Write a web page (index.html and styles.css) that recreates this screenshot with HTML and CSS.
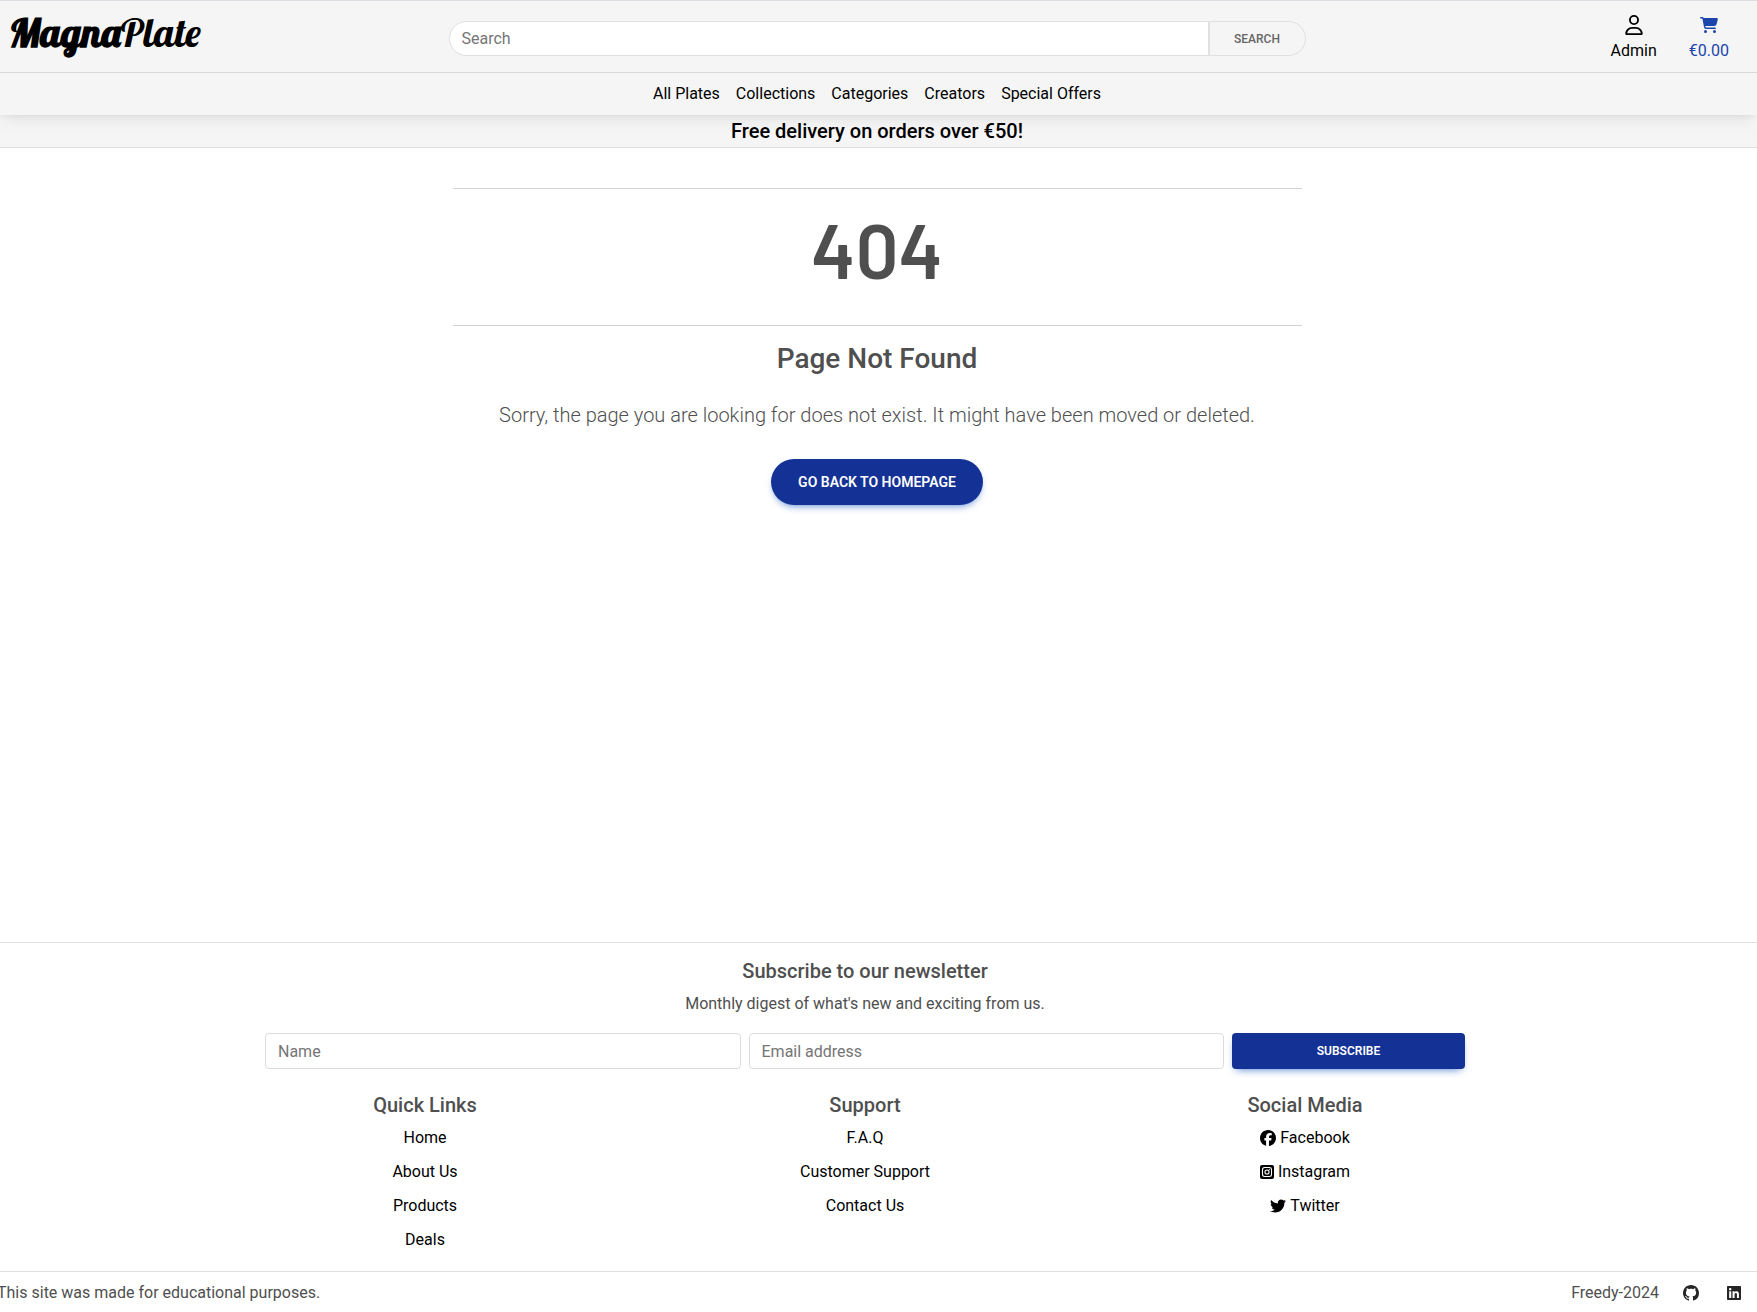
FILE: index.html
```html
<!DOCTYPE html>
<html lang="en">
<head>
<meta charset="utf-8">
<meta name="viewport" content="width=device-width, initial-scale=1">
<title>MagnaPlate</title>
<link rel="stylesheet" href="styles.css">
</head>
<body>
<header class="site-header">
  <div class="topbar">
    <a class="logo" href="#"><strong>Magna</strong><span>Plate</span></a>
    <form class="search">
      <input type="search" placeholder="Search" aria-label="Search">
      <button type="button">Search</button>
    </form>
    <div class="account">
      <a class="account-link" href="#">
        <svg class="icon-user" viewBox="0 0 448 512" aria-hidden="true"><path d="M304 128a80 80 0 1 0 -160 0 80 80 0 1 0 160 0zM96 128a128 128 0 1 1 256 0A128 128 0 1 1 96 128zM49.3 464H398.7c-8.9-63.3-63.3-112-129-112H178.3c-65.7 0-120.1 48.7-129 112zM0 482.3C0 383.8 79.8 304 178.3 304h91.4C368.2 304 448 383.8 448 482.3c0 16.4-13.3 29.7-29.7 29.7H29.7C13.3 512 0 498.7 0 482.3z"/></svg>
        <span>Admin</span>
      </a>
      <a class="account-link cart" href="#">
        <svg class="icon-cart" viewBox="0 0 576 512" aria-hidden="true"><path d="M0 24C0 10.7 10.7 0 24 0H69.5c22 0 41.5 12.8 50.6 32h411c26.3 0 45.5 25 38.6 50.4l-41 152.3c-8.5 31.4-37 53.3-69.5 53.3H170.7l5.4 28.5c2.2 11.3 12.1 19.5 23.6 19.5H488c13.3 0 24 10.7 24 24s-10.7 24-24 24H199.7c-34.6 0-64.3-24.6-70.7-58.5L77.4 54.5c-.7-3.8-4-6.5-7.9-6.5H24C10.7 48 0 37.3 0 24zM128 464a48 48 0 1 1 96 0 48 48 0 1 1 -96 0zm336-48a48 48 0 1 1 0 96 48 48 0 1 1 0-96z"/></svg>
        <span>€0.00</span>
      </a>
    </div>
  </div>
  <nav class="main-nav">
    <a href="#">All Plates</a>
    <a href="#">Collections</a>
    <a href="#">Categories</a>
    <a href="#">Creators</a>
    <a href="#">Special Offers</a>
  </nav>
</header>
<div class="banner">Free delivery on orders over €50!</div>

<main class="not-found">
  <h1>404</h1>
  <h2>Page Not Found</h2>
  <p>Sorry, the page you are looking for does not exist. It might have been moved or deleted.</p>
  <a class="home-button" href="#">Go back to homepage</a>
</main>

<footer class="site-footer">
  <div class="footer-main">
    <section class="newsletter">
      <h3>Subscribe to our newsletter</h3>
      <p>Monthly digest of what's new and exciting from us.</p>
      <form class="subscribe">
        <input type="text" placeholder="Name" aria-label="Name">
        <input type="email" placeholder="Email address" aria-label="Email address">
        <button type="button">Subscribe</button>
      </form>
    </section>
    <div class="footer-columns">
      <section>
        <h3>Quick Links</h3>
        <ul>
          <li><a href="#">Home</a></li>
          <li><a href="#">About Us</a></li>
          <li><a href="#">Products</a></li>
          <li><a href="#">Deals</a></li>
        </ul>
      </section>
      <section>
        <h3>Support</h3>
        <ul>
          <li><a href="#">F.A.Q</a></li>
          <li><a href="#">Customer Support</a></li>
          <li><a href="#">Contact Us</a></li>
        </ul>
      </section>
      <section>
        <h3>Social Media</h3>
        <ul>
          <li><a href="#"><svg class="icon" viewBox="0 0 512 512" aria-hidden="true"><path d="M512 256C512 114.6 397.4 0 256 0S0 114.6 0 256C0 376 82.7 476.8 194.2 504.5V334.2H141.4V256h52.8V222.3c0-87.1 39.4-127.5 125-127.5c16.2 0 44.2 3.2 55.7 6.4V172c-6-.6-16.5-1-29.6-1c-42 0-58.2 15.9-58.2 57.2V256h83.6l-14.4 78.2H287V510.1C413.8 494.8 512 386.9 512 256h0z"/></svg>Facebook</a></li>
          <li><a href="#"><svg class="icon icon-narrow" viewBox="0 0 448 512" aria-hidden="true"><rect y="32" width="448" height="448" rx="64"/><g fill="none" stroke="#fff" stroke-width="34"><rect x="79" y="111" width="290" height="290" rx="72"/><circle cx="224" cy="256" r="66"/></g><circle cx="301" cy="179" r="20" fill="#fff"/></svg>Instagram</a></li>
          <li><a href="#"><svg class="icon" viewBox="0 0 512 512" aria-hidden="true"><path d="M459.37 151.716c.325 4.548.325 9.097.325 13.645 0 138.72-105.583 298.558-298.558 298.558-59.452 0-114.68-17.219-161.137-47.106 8.447.974 16.568 1.299 25.34 1.299 49.055 0 94.213-16.568 130.274-44.832-46.132-.975-84.792-31.188-98.112-72.772 6.498.974 12.995 1.624 19.818 1.624 9.421 0 18.843-1.3 27.614-3.573-48.081-9.747-84.143-51.98-84.143-102.985v-1.299c13.969 7.797 30.214 12.67 47.431 13.319-28.264-18.843-46.781-51.005-46.781-87.391 0-19.492 5.197-37.36 14.294-52.954 51.655 63.675 129.3 105.258 216.365 109.807-1.624-7.797-2.599-15.918-2.599-24.04 0-57.828 46.782-104.934 104.934-104.934 30.213 0 57.502 12.67 76.67 33.137 23.715-4.548 46.456-13.32 66.599-25.34-7.798 24.366-24.366 44.833-46.132 57.827 21.117-2.273 41.584-8.122 60.426-16.243-14.292 20.791-32.161 39.308-52.628 54.253z"/></svg>Twitter</a></li>
        </ul>
      </section>
    </div>
  </div>
  <div class="footer-bar">
    <span>This site was made for educational purposes.</span>
    <div class="credits">
      <span>Freedy-2024</span>
      <a href="#" aria-label="GitHub"><svg class="icon" viewBox="0 0 16 16" aria-hidden="true"><path d="M8 0C3.58 0 0 3.58 0 8c0 3.54 2.29 6.53 5.47 7.59.4.07.55-.17.55-.38 0-.19-.01-.82-.01-1.49-2.01.37-2.53-.49-2.69-.94-.09-.23-.48-.94-.82-1.13-.28-.15-.68-.52-.01-.53.63-.01 1.08.58 1.23.82.72 1.21 1.87.87 2.33.66.07-.52.28-.87.51-1.07-1.78-.2-3.64-.89-3.64-3.95 0-.87.31-1.59.82-2.15-.08-.2-.36-1.02.08-2.12 0 0 .67-.21 2.2.82.64-.18 1.32-.27 2-.27s1.36.09 2 .27c1.53-1.04 2.2-.82 2.2-.82.44 1.1.16 1.92.08 2.12.51.56.82 1.27.82 2.15 0 3.07-1.87 3.75-3.65 3.95.29.25.54.73.54 1.48 0 1.07-.01 1.93-.01 2.2 0 .21.15.46.55.38A8.01 8.01 0 0016 8c0-4.42-3.58-8-8-8z"/></svg></a>
      <a href="#" aria-label="LinkedIn"><svg class="icon icon-narrow" viewBox="0 0 448 512" aria-hidden="true"><path d="M416 32H31.9C14.3 32 0 46.5 0 64.3v383.4C0 465.5 14.3 480 31.9 480H416c17.6 0 32-14.5 32-32.3V64.3c0-17.8-14.4-32.3-32-32.3zM135.4 416H69V202.2h66.5V416zm-33.2-243c-21.3 0-38.5-17.3-38.5-38.5S80.9 96 102.2 96c21.2 0 38.5 17.3 38.5 38.5 0 21.3-17.2 38.5-38.5 38.5zm282.1 243h-66.4V312c0-24.8-.5-56.7-34.5-56.7-34.6 0-39.9 27-39.9 54.9V416h-66.4V202.2h63.7v29.2h.9c8.9-16.8 30.6-34.5 62.2-34.5 66.5 0 78.9 43.8 78.9 100.9V416z"/></svg></a>
    </div>
  </div>
</footer>
</body>
</html>
```
FILE: styles.css
```css
*, *::before, *::after { box-sizing: border-box; }

body {
  margin: 0;
  min-height: 100vh;
  display: flex;
  flex-direction: column;
  background: #fff;
  color: #4f4f4f;
  font-family: Roboto, "Liberation Sans", sans-serif;
  font-size: 16px;
  line-height: 26px;
  overflow-x: hidden;
}

h1, h2, h3, p, ul { margin: 0; padding: 0; }
h1, h2, h3 { font-weight: 500; }
ul { list-style: none; }
a { color: #000; text-decoration: none; }
svg { fill: currentColor; }
input, button { font-family: inherit; }
input::placeholder { color: #757575; opacity: 1; }

/* Header */
.site-header {
  position: relative;
  background: #f5f5f5;
  border-top: 1px solid #dddde4;
  box-shadow: 0 10px 15px -3px rgba(0, 0, 0, 0.05), 0 4px 6px -2px rgba(0, 0, 0, 0.06);
}

.topbar {
  display: grid;
  grid-template-columns: 1fr 2fr 1fr;
  align-items: center;
  height: 72px;
  padding-right: 3px;
  border-bottom: 1px solid #d9d9d9;
}

.logo {
  padding: 0 0 10px 9px;
  font-family: Lobster, "Liberation Serif", serif;
  font-size: 40px;
  line-height: 48px;
}

.search {
  display: flex;
  height: 35px;
  margin: 4px 10px 0;
}

.search input {
  flex: 1;
  min-width: 0;
  padding: 0 12px;
  border: 1px solid #e0e0e0;
  border-radius: 18px 0 0 18px;
  background: #fff;
  font-size: 16px;
  appearance: none;
}

.search button {
  width: 97px;
  border: 1px solid #e0e0e0;
  border-radius: 0 18px 18px 0;
  background: #f5f5f5;
  color: #666;
  font-size: 12px;
  font-weight: 500;
  text-transform: uppercase;
}

.account {
  display: flex;
  justify-content: flex-end;
  gap: 32px;
  padding: 4px 25px 0 0;
}

.account-link {
  display: grid;
  grid-template-rows: 24px 28px;
  place-items: center;
}

.cart { color: #1c45ab; }
.icon-user { width: 18px; height: 20px; }
.icon-cart { width: 18px; height: 16px; }

.main-nav {
  display: flex;
  justify-content: center;
  gap: 16px;
  padding: 8px 3px 8px 0;
}

.banner {
  padding: 3px 3px 3px 0;
  border-bottom: 1px solid #dedede;
  background: #f5f5f5;
  color: #000;
  font-size: 20px;
  font-weight: 500;
  text-align: center;
}

/* Error page */
.not-found {
  display: flex;
  flex-direction: column;
  align-items: center;
  padding: 40px 3px 40px 0;
  text-align: center;
}

.not-found h1 {
  width: calc(50% - 28px);
  padding: 20px 0 36px;
  border: solid #d3d3d3;
  border-width: 1px 0;
  font-family: Barlow, Roboto, sans-serif;
  font-size: 76px;
  font-weight: 600;
  line-height: 80px;
}

.not-found h2 {
  margin-top: 16px;
  font-size: 28px;
  line-height: 34px;
}

.not-found p {
  margin: 24px 0 28px;
  font-size: 20px;
  font-weight: 300;
  line-height: 31px;
}

.home-button {
  padding: 10px 27px;
  border-radius: 23px;
  background: #143296;
  box-shadow: 0 4px 9px -4px #3b71ca;
  color: #fff;
  font-size: 14px;
  font-weight: 600;
  text-transform: uppercase;
}

/* Footer */
.site-footer {
  margin-top: auto;
  border-top: 1px solid #e0e0e0;
}

.footer-main {
  padding: 12px 27px 18px 0;
  text-align: center;
}

.site-footer h3 {
  font-size: 20px;
  line-height: 32px;
}

.newsletter {
  max-width: 1200px;
  margin: 0 auto;
}

.newsletter p { margin: 4px 0 16px; }

.subscribe {
  display: grid;
  grid-template-columns: 1fr 1fr 233px;
  gap: 8px;
}

.subscribe input {
  min-width: 0;
  height: 36px;
  padding: 0 12px;
  border: 1px solid #dcdcdc;
  border-radius: 4px;
  font-size: 16px;
}

.subscribe button {
  border: 0;
  border-radius: 4px;
  background: #143296;
  box-shadow: 0 4px 9px -4px #3b71ca;
  color: #fff;
  font-size: 12px;
  font-weight: 600;
  text-transform: uppercase;
}

.footer-columns {
  display: grid;
  grid-template-columns: repeat(3, 1fr);
  max-width: 1320px;
  margin: 20px auto 0;
}

.footer-columns ul {
  display: grid;
  gap: 8px;
  margin-top: 4px;
}

.footer-columns a {
  display: flex;
  align-items: center;
  justify-content: center;
  gap: 4px;
}

.icon { display: block; width: 16px; height: 16px; }
.icon-narrow { width: 14px; }

.footer-bar {
  display: flex;
  justify-content: space-between;
  margin-left: -3px;
  padding: 8px 16px 6px 0;
  border-top: 1px solid #e0e0e0;
}

.credits {
  display: flex;
  align-items: center;
  gap: 28px;
}

.credits span { margin-right: -4px; }
.credits a { color: #262626; }
```
